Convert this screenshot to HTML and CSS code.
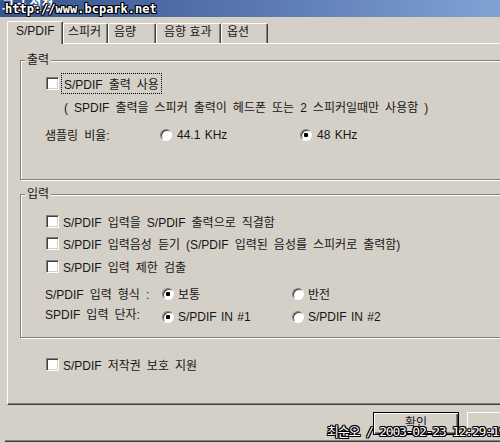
FILE: index.html
```html
<!DOCTYPE html>
<html lang="ko">
<head>
    <meta charset="UTF-8">
    <meta name="viewport" content="width=device-width, initial-scale=1.0">
    <title>고급 설정</title>
    <link rel="stylesheet" href="styles.css">
</head>
<body>
<div class="window">
    <div class="titlebar">
        <span class="title">고급 설정</span>
        <span class="stamp">http://www.bcpark.net</span>
    </div>

    <div class="tabs">
        <div class="tab active t1">S/PDIF</div>
        <div class="tab t2">스피커</div>
        <div class="tab t3">음량</div>
        <div class="tab t4">음향 효과</div>
        <div class="tab t5">옵션</div>
    </div>

    <div class="panel">
        <fieldset class="group out">
            <legend>출력</legend>
            <div class="rows">
                <label class="row check"><input type="checkbox"><span class="focus">S/PDIF 출력 사용</span></label>
                <div class="row note">( SPDIF 출력을 스피커 출력이 헤드폰 또는 2 스피커일때만 사용함 )</div>
                <div class="row choice">
                    <span class="name">샘플링 비율:</span>
                    <label class="opt"><input type="radio" name="rate">44.1 KHz</label>
                    <label class="opt"><input type="radio" name="rate" checked>48 KHz</label>
                </div>
            </div>
        </fieldset>

        <fieldset class="group in">
            <legend>입력</legend>
            <div class="rows">
                <label class="row check"><input type="checkbox">S/PDIF 입력을 S/PDIF 출력으로 직결함</label>
                <label class="row check"><input type="checkbox">S/PDIF 입력음성 듣기 (S/PDIF 입력된 음성를 스피커로 출력함)</label>
                <label class="row check"><input type="checkbox">S/PDIF 입력 제한 검출</label>
                <div class="row choice">
                    <span class="name">S/PDIF 입력 형식 :</span>
                    <label class="opt"><input type="radio" name="fmt" checked>보통</label>
                    <label class="opt"><input type="radio" name="fmt">반전</label>
                </div>
                <div class="row choice port">
                    <span class="name">SPDIF 입력 단자:</span>
                    <label class="opt"><input type="radio" name="port" checked>S/PDIF IN #1</label>
                    <label class="opt"><input type="radio" name="port">S/PDIF IN #2</label>
                </div>
            </div>
        </fieldset>

        <label class="row check solo"><input type="checkbox">S/PDIF 저작권 보호 지원</label>
    </div>

    <div class="footer">
        <button class="btn default">확인</button>
        <button class="btn"></button>
    </div>

    <div class="stamp bottom">최순오 / 2003-02-23 12:29:19</div>
</div>
</body>
</html>
```

FILE: styles.css
```css
* { box-sizing: border-box; }
html, body { margin: 0; height: 100%; overflow: hidden; }
body { background: #d4d0c8; font-family: "Liberation Sans", "Noto Sans CJK KR", sans-serif; font-size: 12px; word-spacing: 2.7px; color: #161616; }
.window { position: relative; width: 580px; }

/* title bar */
.titlebar { position: relative; height: 17px; overflow: hidden; background: linear-gradient(to right, #36548f, #5a79b3 45%, #8db0de); }
.title { display: block; margin: -4px 0 0 2px; color: #fff; font-weight: bold; font-size: 13px; line-height: 17px; word-spacing: 0; }
.stamp { position: absolute; left: 5px; top: 2px; color: #fff; word-spacing: 0; font: bold 12px/14px "DejaVu Sans Mono", "Noto Sans CJK KR", monospace;
    text-shadow: -1px 0 #000, 1px 0 #000, 0 -1px #000, 0 1px #000, -1px -1px #000, 1px 1px #000, -1px 1px #000, 1px -1px #000; }
.stamp.bottom { left: 327px; top: 424px; font-weight: normal; font-size: 13px; line-height: 16px; letter-spacing: -1.2px; }

/* tabs */
.tabs { position: relative; z-index: 1; display: flex; align-items: flex-end; height: 26px; padding-left: 7px; }
.tab { height: 20px; padding: 0 5px; line-height: 17px; white-space: nowrap; word-spacing: 0; border: 1px solid; border-bottom: 0; border-color: #fff #404040 transparent #fff; border-radius: 2px 2px 0 0; box-shadow: inset -1px 0 0 #808080; }
.tab.active { height: 23px; margin-bottom: -1px; padding-top: 1px; background: #d4d0c8; }
.t1 { width: 56px; padding-left: 8px; }
.t2 { width: 45px; padding-left: 4px; }
.t3 { width: 48px; }
.t4 { width: 65px; padding-left: 7px; }
.t5 { width: 47px; }

/* page */
.panel { height: 362px; margin-left: 7px; padding-left: 12px; border-top: 1px solid #fff; border-left: 1px solid #fff; border-bottom: 1px solid #404040; box-shadow: inset 0 -1px 0 #808080; }

.group { margin: 9px 0 0; padding: 0; min-width: 0; border: 1px solid #808080; box-shadow: inset 1px 1px 0 #fff, 1px 1px 0 #fff; }
.group legend { margin-left: 4px; padding: 0 2px; line-height: 15px; background: #d4d0c8; }
.group.in { margin-top: 7px; }

.rows { padding: 7px 0 37px 25px; }
.in .rows { padding: 11px 0 16px 25px; }

.row { display: flex; align-items: center; height: 16px; white-space: nowrap; }
.out .note { margin-top: 7px; padding-left: 18px; }
.out .choice { margin-top: 12px; }
.in .check + .check { margin-top: 6px; }
.in .check + .check + .check { margin-top: 7px; }
.in .choice { margin-top: 11px; }
.in .choice + .choice { margin-top: 4px; }

.choice { display: grid; grid-template-columns: 114px 140px auto; }
.in .choice { grid-template-columns: 116px 130px auto; }
.name { margin-left: -1px; }
.opt { display: flex; align-items: center; word-spacing: 1px; }
.port { align-items: start; }
.port .opt { margin-top: 5px; }

.focus { padding: 0 1px; outline: 1px dotted #000; outline-offset: 1px; }
.solo { margin: 18px 0 0 26px; }

input[type=checkbox] { appearance: none; flex: none; width: 13px; height: 13px; margin: 0 4px 0 0; background: #fff; border: 1px solid; border-color: #808080 #fff #fff #808080; box-shadow: inset 1px 1px 0 #404040, inset -1px -1px 0 #d4d0c8; }
input[type=radio] { appearance: none; flex: none; width: 12px; height: 12px; margin: 0 5px 0 0; border-radius: 50%; background: #fff; border: 1px solid; border-color: #808080 #fff #fff #808080; box-shadow: inset 1px 1px 0 #404040; }
input[type=radio]:checked { background: radial-gradient(circle, #000 0 2px, #fff 2.5px); }
.in input[type=radio] { margin-right: 4px; }

/* buttons */
.footer { display: flex; gap: 8px; height: 36px; margin-left: 5px; padding: 7px 0 0 368px; border-bottom: 1px solid #808080; box-shadow: 0 1px 0 #404040; }
.btn { flex: none; width: 87px; height: 23px; padding: 0 0 4px; font: inherit; color: inherit; background: #d4d0c8; border: 0; box-shadow: inset 1px 1px 0 #fff, inset -1px -1px 0 #404040, inset -2px -2px 0 #808080; }
.btn.default { width: 86px; border: 1px solid #000; }
```
